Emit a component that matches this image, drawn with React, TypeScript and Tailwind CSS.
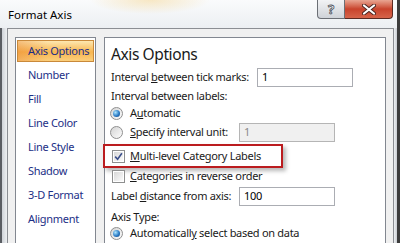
import React from 'react';

const Radio = ({ checked }: { checked?: boolean }) => (
    <span className="w-[13px] h-[13px] rounded-full border border-[#8f8f8f] bg-gradient-to-br from-[#d4d4d4] to-[#fdfdfd] flex items-center justify-center shrink-0">
        {checked && (
            <span className="w-[7px] h-[7px] rounded-full bg-[radial-gradient(circle_at_35%_35%,#aee6ff,#2b7cc6_55%,#123f7a)]" />
        )}
    </span>
);

const Check = ({ checked }: { checked?: boolean }) => (
    <span className="w-[13px] h-[13px] border border-[#8e8f8f] bg-white p-[1px] shrink-0 flex">
        <span className="flex-1 bg-gradient-to-br from-[#d8d8d8] to-[#fbfbfb] flex items-center justify-center">
            {checked && (
                <svg width="9" height="9" viewBox="0 0 9 9">
                    <path d="M1.2 4.6 L3.6 7.2 L7.9 1.2" stroke="#3b4f8a" strokeWidth="1.6" fill="none" />
                </svg>
            )}
        </span>
    </span>
);

const Field = ({ value, disabled }: { value: string; disabled?: boolean }) => (
    <div
        className={
            disabled
                ? 'w-[96px] h-[19px] shrink-0 border border-[#b5b5b5] bg-[#f0f0f0] text-[#8a8a8a] pl-[4px] flex items-center'
                : 'w-[96px] h-[19px] shrink-0 border border-[#abadb3] bg-white text-black pl-[4px] flex items-center'
        }
    >
        {value}
    </div>
);

const navItems = ['Number', 'Fill', 'Line Color', 'Line Style', 'Shadow', '3-D Format', 'Alignment'];

const App: React.FC = () => {
    return (
        <div className="w-[400px] h-[243px] flex overflow-hidden bg-[#3c3c3c] font-['Noto_Sans',sans-serif] text-[11px] tracking-[-0.3px] text-[#1a1a1a] whitespace-nowrap">
            {/* Window */}
            <div className="w-[397px] h-full flex flex-col bg-[#e9ecf0]">
                {/* Title bar */}
                <div className="h-[28px] flex items-start shrink-0 bg-[radial-gradient(ellipse_60px_14px_at_150px_0px,rgba(245,215,150,0.55),transparent),linear-gradient(#fafbfc,#eceff2)]">
                    <span className="pl-[8px] pt-[6px] text-[11.5px] tracking-normal text-black">Format Axis</span>
                    <div className="ml-auto mr-[4px] flex h-[19px]">
                        <div className="w-[28px] h-full border border-t-0 border-[#6b6f75] rounded-bl-[4px] bg-gradient-to-b from-[#f2f3f5] to-[#cfd3d8] flex items-center justify-center">
                            <span className="text-[13px] font-bold leading-none text-white [-webkit-text-stroke:0.8px_#4a4f58]">?</span>
                        </div>
                        <div className="w-[48px] h-full border border-t-0 border-l-0 border-[#5c2a22] rounded-br-[4px] bg-gradient-to-b from-[#e8a592] via-[#c8432c] to-[#d6644a] flex items-center justify-center">
                            <svg width="14" height="11" viewBox="0 0 14 11">
                                <path d="M2 1.5 L12 9.5 M12 1.5 L2 9.5" stroke="#4b2520" strokeWidth="4" strokeLinecap="round" />
                                <path d="M2 1.5 L12 9.5 M12 1.5 L2 9.5" stroke="#ffffff" strokeWidth="2.2" strokeLinecap="round" />
                            </svg>
                        </div>
                    </div>
                </div>

                {/* Body */}
                <div className="flex-1 flex">
                    <div className="w-[7px] border-l-2 border-[#5a5d62] bg-gradient-to-r from-[#cfd3d8] to-[#eef0f2]" />
                    <div className="w-[387px] border border-b-0 border-[#8b8e93] bg-[#f0f0f0] pt-[8px] pl-[7px] pr-[7px] flex">
                        {/* Nav list */}
                        <div className="w-[81px] shrink-0 border border-b-0 border-[#828790] bg-white pt-[2px] pl-[1px] pr-[1px] flex flex-col gap-[2px]">
                            <div className="h-[22px] w-[77px] border border-[#c9893a] bg-[linear-gradient(90deg,rgba(230,120,40,0.35),transparent_40%),linear-gradient(#fde7b0,#f8b650_55%,#fbcf7c)] pl-[10px] flex items-center text-[#1c2f86]">
                                Axis Options
                            </div>
                            {navItems.map((n) => (
                                <div key={n} className="h-[22px] pl-[11px] flex items-center text-[#1c2f86]">
                                    {n}
                                </div>
                            ))}
                        </div>

                        {/* Options panel */}
                        <div className="ml-[8px] w-[282px] shrink-0 border border-b-0 border-[#828790] bg-white pl-[6px] flex flex-col">
                            <div className="h-[30px] pt-[4px] flex items-center text-[15.5px] tracking-[-0.4px] text-[#1a1a1a]">Axis Options</div>
                            <div className="h-[19px] flex items-center">
                                <span className="w-[146px] shrink-0">
                                    Interval <span className="underline">b</span>etween tick marks:
                                </span>
                                <Field value="1" />
                            </div>
                            <div className="h-[19px] flex items-center">Interval between labels:</div>
                            <div className="h-[15px] flex items-center -ml-[1px] gap-[7px]">
                                <Radio checked />
                                <span>
                                    A<span className="underline">u</span>tomatic
                                </span>
                            </div>
                            <div className="h-[23px] flex items-center">
                                <div className="w-[129px] shrink-0 -ml-[1px] flex items-center gap-[7px]">
                                    <Radio />
                                    <span>
                                        <span className="underline">S</span>pecify interval unit:
                                    </span>
                                </div>
                                <Field value="1" disabled />
                            </div>
                            <div className="h-[24px] w-[180px] shrink-0 -ml-[8px] border-2 border-[#bb1c1f] shadow-[3px_3px_4px_rgba(0,0,0,0.28)] pl-[7px] flex items-center gap-[5px]">
                                <Check checked />
                                <span>
                                    <span className="underline">M</span>ulti-level Category Labels
                                </span>
                            </div>
                            <div className="h-[17px] flex items-center pl-[1px] gap-[5px]">
                                <Check />
                                <span>
                                    <span className="underline">C</span>ategories in reverse order
                                </span>
                            </div>
                            <div className="h-[23px] flex items-center">
                                <span className="w-[128px] shrink-0">
                                    Label <span className="underline">d</span>istance from axis:
                                </span>
                                <Field value="100" />
                            </div>
                            <div className="h-[19px] flex items-center">Axis Type:</div>
                            <div className="h-[13px] flex items-center -ml-[1px] gap-[7px]">
                                <Radio checked />
                                <span>
                                    Automaticall<span className="underline">y</span> select based on data
                                </span>
                            </div>
                        </div>
                    </div>
                    <div className="w-[3px] bg-gradient-to-r from-[#eef0f2] to-[#c9cdd2]" />
                </div>
            </div>
        </div>
    );
};

export default App;
